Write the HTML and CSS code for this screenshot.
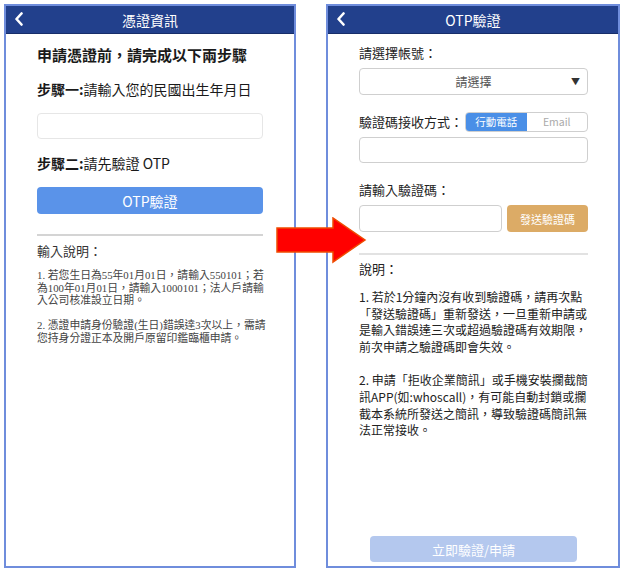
FILE: index.html
```html
<!DOCTYPE html>
<html lang="zh-Hant">
<head>
  <meta charset="UTF-8" />
  <title>憑證申請流程</title>
  <link rel="stylesheet" href="styles.css">
</head>
<body>
  <div class="stage">
    <!-- Step 1: certificate info -->
    <div class="phone">
      <div class="topbar">
        <svg class="back" width="10" height="14" viewBox="0 0 10 14"><polyline points="7.5,1.5 2.5,7 7.5,12.5" fill="none" stroke="#fff" stroke-width="2.6" stroke-linecap="round" stroke-linejoin="round"/></svg>
        <span class="topbar-title">憑證資訊</span>
      </div>
      <div class="content">
        <h2 class="lead">申請憑證前，請完成以下兩步驟</h2>
        <p class="step step-one"><b>步驟一:</b>請輸入您的民國出生年月日</p>
        <div class="field field-birth"></div>
        <p class="step step-two"><b>步驟二:</b>請先驗證 OTP</p>
        <button class="btn-otp">OTP驗證</button>
        <hr class="divider">
        <div class="hint-title">輸入說明：</div>
        <div class="notes">
          <p>1. 若您生日為55年01月01日，請輸入550101；若<br>為100年01月01日，請輸入1000101；法人戶請輸<br>入公司核准設立日期。</p>
          <p>2. 憑證申請身份驗證(生日)錯誤達3次以上，需請<br>您持身分證正本及開戶原留印鑑臨櫃申請。</p>
        </div>
      </div>
    </div>

    <!-- Step 2: OTP -->
    <div class="phone phone-right">
      <div class="topbar">
        <svg class="back" width="10" height="14" viewBox="0 0 10 14"><polyline points="7.5,1.5 2.5,7 7.5,12.5" fill="none" stroke="#fff" stroke-width="2.6" stroke-linecap="round" stroke-linejoin="round"/></svg>
        <span class="topbar-title">OTP驗證</span>
      </div>
      <div class="content content-otp">
        <div class="label label-account">請選擇帳號：</div>
        <div class="select">請選擇<span class="caret">▼</span></div>
        <div class="method-row">
          <span class="label">驗證碼接收方式：</span>
          <div class="toggle">
            <span class="toggle-opt active">行動電話</span>
            <span class="toggle-opt">Email</span>
          </div>
        </div>
        <div class="field field-phone"></div>
        <div class="label label-code">請輸入驗證碼：</div>
        <div class="code-row">
          <div class="field field-code"></div>
          <button class="btn-send">發送驗證碼</button>
        </div>
        <hr class="divider divider-light">
        <div class="hint-title hint-otp">說明：</div>
        <div class="notes notes-otp">
          <p>1. 若於1分鐘內沒有收到驗證碼，請再次點<br>「發送驗證碼」重新發送，一旦重新申請或<br>是輸入錯誤達三次或超過驗證碼有效期限，<br>前次申請之驗證碼即會失效。</p>
          <p>2. 申請「拒收企業簡訊」或手機安裝攔截簡<br>訊APP(如:whoscall)，有可能自動封鎖或攔<br>截本系統所發送之簡訊，導致驗證碼簡訊無<br>法正常接收。</p>
        </div>
        <button class="btn-submit">立即驗證/申請</button>
      </div>
    </div>

    <svg class="arrow" width="92" height="48" viewBox="0 0 92 48">
      <polygon points="1,11 57,11 57,1 89,23 57,45 57,35 1,35" fill="#ff0000" stroke="#ef4b00" stroke-width="1.5" stroke-linejoin="miter"/>
    </svg>
  </div>
</body>
</html>
```

FILE: styles.css
```css
:root {
  --frame: #6f8ddc;
  --navy: #22408c;
  --navy-dark: #172e6a;
  --blue: #5a93e9;
  --blue-pale: #b4c8ee;
  --tan: #dcab66;
  --text: #1a1a1a;
  --muted: #444;
  --line: #d4d4d4;
}

html, body {
  margin: 0;
  background: #fff;
  font-family: "Noto Sans CJK TC", "Noto Sans", sans-serif;
  color: var(--text);
}

.stage {
  position: relative;
  display: flex;
  gap: 30px;
  padding: 4px 0 0 4px;
}

.phone {
  width: 292px;
  height: 564px;
  box-sizing: border-box;
  border: 2px solid var(--frame);
  display: flex;
  flex-direction: column;
}
.phone-right { width: 294px; }

.topbar {
  position: relative;
  height: 27px;
  background: var(--navy);
  border-bottom: 1px solid var(--navy-dark);
  display: flex;
  align-items: center;
  justify-content: center;
  flex-shrink: 0;
}
.back {
  position: absolute;
  left: 8px;
  top: 6px;
}
.topbar-title {
  color: #fff;
  font-size: 14px;
  line-height: 20px;
}

.content {
  flex: 1;
  display: flex;
  flex-direction: column;
  padding: 0 31px;
}
.content-otp { padding: 0 30px 0 31px; }

/* left screen */
.lead {
  margin: 10px 0 0;
  font-size: 15px;
  font-weight: bold;
  line-height: 22px;
  white-space: nowrap;
}
.step {
  margin: 12px 0 0;
  font-size: 14px;
  line-height: 22px;
  font-weight: normal;
  white-space: nowrap;
}
.step b { font-weight: bold; }
.step-two { margin-top: 13px; }

.field {
  height: 26px;
  box-sizing: border-box;
  border: 1px solid #e6e6e6;
  border-radius: 4px;
  background: #fff;
}
.field-birth { margin-top: 13px; }

.btn-otp {
  margin-top: 13px;
  height: 27px;
  border: none;
  border-radius: 4px;
  background: var(--blue);
  color: #fff;
  font-family: inherit;
  font-size: 14px;
  padding: 0;
}

.divider {
  margin: 20px 0 0;
  border: none;
  height: 2px;
  background: var(--line);
}
.divider-light { margin-top: 21px; background: #e2e2e2; }

.hint-title {
  margin-top: 6px;
  font-size: 13px;
  line-height: 18px;
  color: #333;
}

.notes {
  margin-top: 9px;
  font-family: "Liberation Serif", "Noto Sans CJK TC", serif;
  font-size: 10.8px;
  line-height: 12.5px;
  color: var(--muted);
  white-space: nowrap;
}
.notes p { margin: 0 0 12.5px; }

/* right screen */
.label {
  font-size: 13px;
  line-height: 20px;
  color: #222;
  white-space: nowrap;
}
.label-account { margin-top: 9px; }

.select {
  position: relative;
  margin-top: 5px;
  height: 27px;
  box-sizing: border-box;
  border: 1px solid #cfcfcf;
  border-radius: 4px;
  text-align: center;
  font-size: 12px;
  line-height: 25px;
  color: #555;
}
.caret {
  position: absolute;
  right: 7px;
  top: 0;
  font-size: 9px;
  color: #333;
}

.method-row {
  margin-top: 17px;
  display: flex;
  justify-content: space-between;
  align-items: center;
  height: 20px;
}
.toggle {
  display: flex;
  width: 123px;
  height: 20px;
  box-sizing: border-box;
  border: 1px solid #cfcfcf;
  border-radius: 4px;
  overflow: hidden;
  flex-shrink: 0;
}
.toggle-opt {
  flex: 1;
  text-align: center;
  font-size: 10.5px;
  line-height: 18px;
  color: #aaa;
}
.toggle-opt.active {
  background: #4a8fe7;
  color: #fff;
}

.field-phone {
  margin-top: 5px;
  border-color: #cfcfcf;
}
.label-code { margin-top: 17px; }

.code-row {
  margin-top: 5px;
  display: flex;
  gap: 5px;
  height: 27px;
}
.field-code {
  flex: 1;
  height: 27px;
  border-color: #cfcfcf;
}
.btn-send {
  width: 81px;
  border: none;
  border-radius: 4px;
  background: var(--tan);
  color: #fff;
  font-family: inherit;
  font-size: 11px;
  padding: 0;
}

.hint-otp { margin-top: 5px; color: #222; }

.notes-otp {
  margin-top: 11px;
  font-family: "Noto Sans CJK TC", sans-serif;
  font-size: 12px;
  line-height: 16.6px;
  color: #222;
}
.notes-otp p { margin: 0 0 17px; }

.btn-submit {
  margin: auto auto 4px;
  width: 207px;
  height: 26px;
  border: none;
  border-radius: 4px;
  background: var(--blue-pale);
  color: #fff;
  font-family: inherit;
  font-size: 13px;
  padding: 0;
}

/* red arrow sits over both frames */
.arrow {
  position: absolute;
  left: 276px;
  top: 217px;
}
```
